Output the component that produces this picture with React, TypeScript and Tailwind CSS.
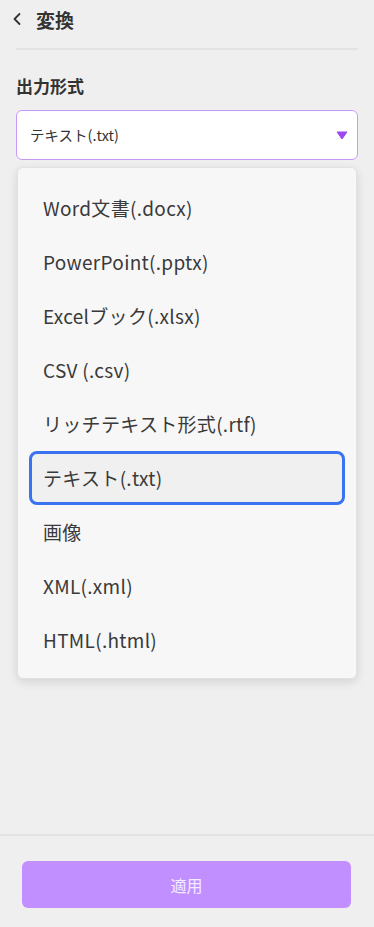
import React from "react";

const items = [
  "Word文書(.docx)",
  "PowerPoint(.pptx)",
  "Excelブック(.xlsx)",
  "CSV (.csv)",
  "リッチテキスト形式(.rtf)",
  "テキスト(.txt)",
  "画像",
  "XML(.xml)",
  "HTML(.html)",
];

export default function App() {
  return (
    <div
      className="w-[374px] h-[927px] bg-[#efefef] flex flex-col text-[#333]"
      style={{ fontFamily: '"Noto Sans CJK JP", "Noto Sans", sans-serif' }}
    >
      <div className="h-[37px] flex items-center px-[12px] gap-[14px] pt-[1px]">
        <svg width="10" height="14" viewBox="0 0 10 14" fill="none">
          <path d="M7.5 2 L2.5 7 L7.5 12" stroke="#333" strokeWidth="1.8" strokeLinecap="round" strokeLinejoin="round" />
        </svg>
        <span className="text-[19px] font-bold leading-none">変換</span>
      </div>
      <div className="mx-[16px] mt-[11px] h-[2px] bg-[#e3e3e3]" />
      <div className="px-[16px] pt-[25px] text-[17px] font-bold leading-[22px]">出力形式</div>
      <div className="mx-[16px] mt-[13px] h-[50px] bg-white border border-[#c899f7] rounded-[6px] flex items-center justify-between pl-[13px] pr-[9px]">
        <span className="text-[14.5px] text-[#333]">テキスト(.txt)</span>
        <svg width="12" height="9" viewBox="0 0 12 9">
          <path d="M1 1 L11 1 L6 8 Z" fill="#9a4af0" stroke="#9a4af0" strokeWidth="1" strokeLinejoin="round" />
        </svg>
      </div>
      <div className="ml-[17px] mr-[17px] mt-[7px] bg-[#f7f7f7] border border-[#e2e2e2] rounded-[6px] shadow-[0_3px_10px_rgba(0,0,0,0.12)] pt-[13px] pb-[11px] px-[11px]">
        {items.map((it) => {
          const sel = it === "テキスト(.txt)";
          return (
            <div
              key={it}
              className={
                sel
                  ? "h-[54px] flex items-center pl-[11px] border-[3.5px] border-[#3a72f2] rounded-[8px] bg-[#f0f0f0] text-[19px] tracking-[0.3px] text-[#3a3a3a]"
                  : "h-[54px] flex items-center pl-[11px] border-[3.5px] border-transparent text-[19px] tracking-[0.3px] text-[#3a3a3a]"
              }
            >
              {it}
            </div>
          );
        })}
      </div>
      <div className="flex-1" />
      <div className="h-[2px] bg-[#e3e3e3]" />
      <div className="h-[91px] px-[22px] pt-[25px]">
        <div className="h-[47px] w-[329px] bg-[#c18fff] rounded-[6px] flex items-center justify-center text-[16px] text-[#f4ecff]">
          適用
        </div>
      </div>
    </div>
  );
}
